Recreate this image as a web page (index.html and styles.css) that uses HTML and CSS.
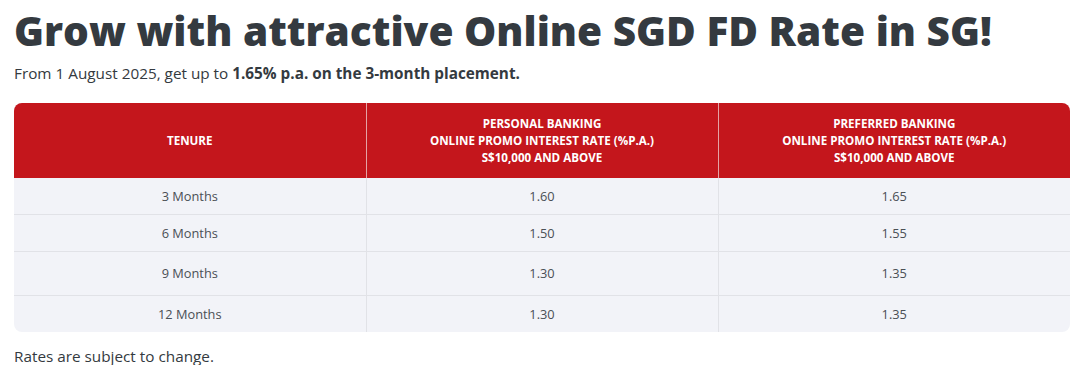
FILE: index.html
```html
<!DOCTYPE html>
<html lang="en">
<head>
<meta charset="utf-8">
<title>SGD FD Rate</title>
<link rel="stylesheet" href="styles.css">
</head>
<body>
<main class="page">
  <h1 class="title">Grow with attractive Online SGD FD Rate in SG!</h1>
  <p class="lead">From 1 August 2025, get up to <strong>1.65% p.a. on the 3-month placement.</strong></p>
  <div class="table-wrap">
    <table class="rates">
      <thead>
        <tr>
          <th>TENURE</th>
          <th>PERSONAL BANKING<br>ONLINE PROMO INTEREST RATE (%P.A.)<br>S$10,000 AND ABOVE</th>
          <th>PREFERRED BANKING<br>ONLINE PROMO INTEREST RATE (%P.A.)<br>S$10,000 AND ABOVE</th>
        </tr>
      </thead>
      <tbody>
        <tr class="r1"><td>3 Months</td><td>1.60</td><td>1.65</td></tr>
        <tr class="r2"><td>6 Months</td><td>1.50</td><td>1.55</td></tr>
        <tr class="r3"><td>9 Months</td><td>1.30</td><td>1.35</td></tr>
        <tr class="r4"><td>12 Months</td><td>1.30</td><td>1.35</td></tr>
      </tbody>
    </table>
  </div>
  <p class="note">Rates are subject to change.</p>
</main>
</body>
</html>
```
FILE: styles.css
```css
* { box-sizing: border-box; }
html, body { margin: 0; padding: 0; background: #fff; }
body {
  font-family: "Open Sans", "Noto Sans", sans-serif;
  color: #343a40;
}
.page {
  padding: 0 10px 0 14px;
}
.title {
  margin: 0;
  padding-top: 3px;
  font-size: 40.6px;
  line-height: 56px;
  font-weight: 800;
  color: #343a40;
  letter-spacing: 0;
}
.lead {
  margin: 3px 0 0;
  font-size: 15.3px;
  line-height: 22px;
  color: #343a40;
}
.lead strong { font-weight: 700; }
.table-wrap {
  margin-top: 19px;
  width: 1056px;
  border-radius: 8px;
  overflow: hidden;
  background: #f2f3f8;
}
.rates {
  width: 100%;
  border-collapse: collapse;
  table-layout: fixed;
}
.rates th {
  background: #c4161c;
  color: #fff;
  font-size: 11.6px;
  font-weight: 700;
  line-height: 17px;
  height: 75px;
  padding: 0 8px;
  text-align: center;
  vertical-align: middle;
  border-left: 1px solid #e4a3a5;
}
.rates th:first-child, .rates td:first-child { border-left: none; }
.rates td {
  font-size: 12.8px;
  line-height: 18px;
  color: #4a4f55;
  text-align: center;
  vertical-align: middle;
  padding: 0 8px;
  border-left: 1px solid #e1e2e7;
  border-top: 1px solid #e1e2e7;
}
.rates tbody tr:first-child td { border-top: none; }
.r1 td { height: 36px; }
.r2 td { height: 37px; }
.r3 td { height: 44px; }
.r4 td { height: 37px; }
.note {
  margin: 13px 0 0;
  font-size: 15.3px;
  line-height: 22px;
  color: #343a40;
}
```
